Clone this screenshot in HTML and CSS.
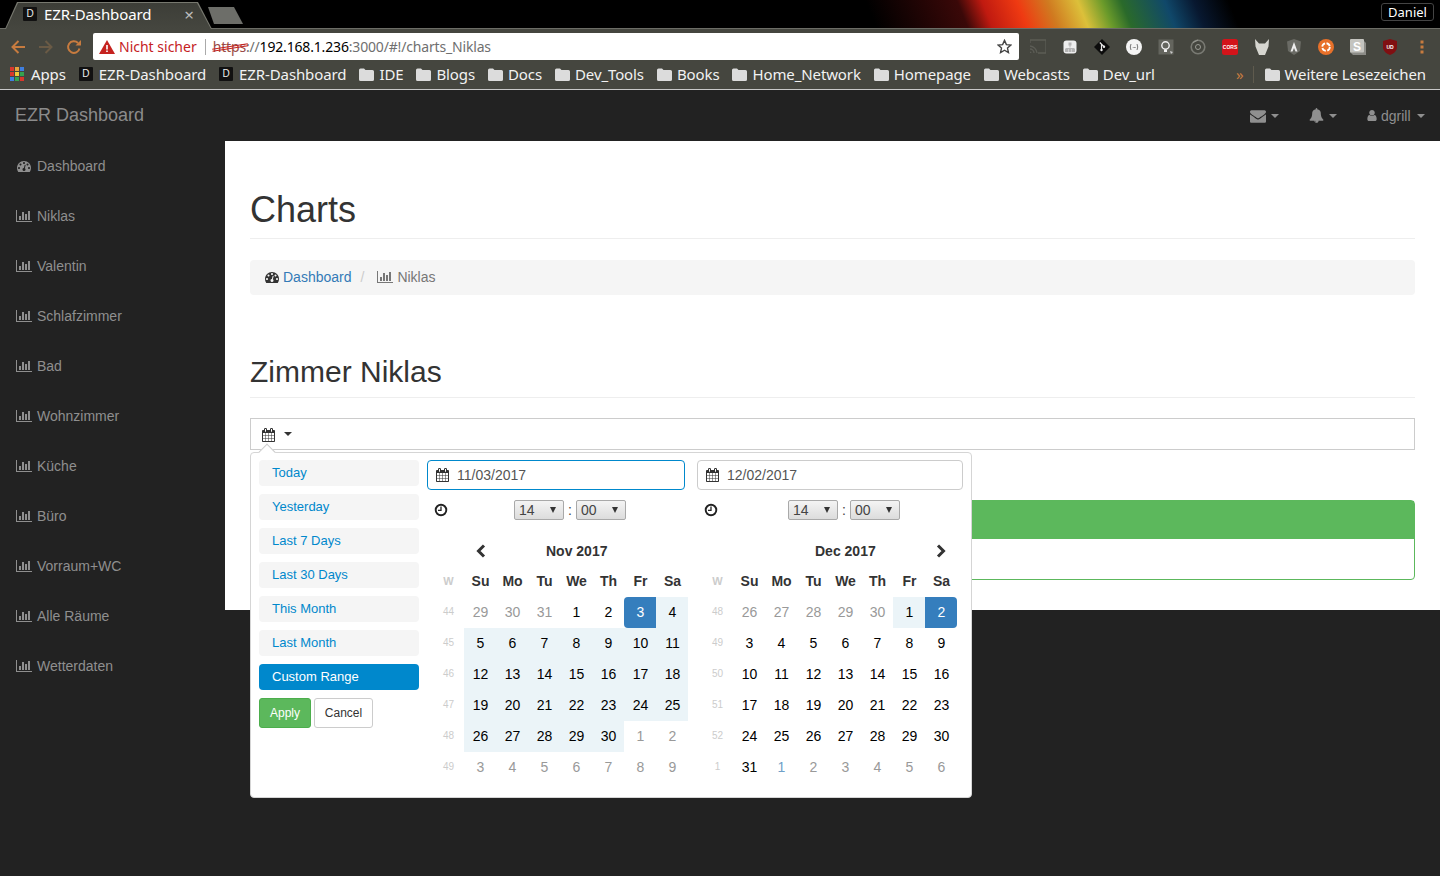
FILE: index.html
```html
<!DOCTYPE html>
<html lang="de">
<head>
<meta charset="utf-8">
<title>EZR-Dashboard</title>
<link rel="stylesheet" href="styles.css">
</head>
<body>
<svg class="defs" aria-hidden="true">
  <symbol id="i-bar" viewBox="0 0 2048 1792"><path d="M640 896v512h-256v-512h256zm384-512v1024h-256v-1024h256zm1024 1152v128h-2048v-1536h128v1408h1920zm-640-896v768h-256v-768h256zm384-384v1152h-256v-1152h256z"/></symbol>
  <symbol id="i-dash" viewBox="0 0 1792 1792"><path d="M384 1152q0-53-37.500-90.500t-90.500-37.500-90.500 37.500-37.500 90.500 37.500 90.500 90.500 37.500 90.500-37.500 37.500-90.500zm192-448q0-53-37.500-90.500t-90.500-37.500-90.500 37.500-37.500 90.500 37.500 90.500 90.500 37.500 90.500-37.500 37.500-90.500zm428 481l101-382q6-26-7.500-48.500t-38.500-29.500-48 6.500-30 39.500l-101 382q-60 5-107 43.500t-63 98.500q-20 77 20 146t117 89 146-20 89-117q16-60-6-117t-72-91zm660-33q0-53-37.500-90.500t-90.500-37.500-90.500 37.500-37.500 90.500 37.500 90.500 90.500 37.500 90.500-37.500 37.500-90.500zm-640-640q0-53-37.500-90.500t-90.500-37.500-90.500 37.500-37.500 90.500 37.500 90.500 90.500 37.500 90.500-37.500 37.500-90.500zm448 192q0-53-37.500-90.500t-90.500-37.500-90.500 37.500-37.500 90.500 37.500 90.500 90.500 37.500 90.500-37.500 37.500-90.500zm320 448q0 261-141 483-19 29-54 29h-1402q-35 0-54-29-141-221-141-483 0-182 71-348t191-286 286-191 348-71 348 71 286 191 191 286 71 348z"/></symbol>
  <symbol id="i-cal" viewBox="0 0 1664 1792"><path d="M192 1664h288v-288h-288v288zm352 0h320v-288h-320v288zm-352-352h288v-320h-288v320zm352 0h320v-320h-320v320zm-352-384h288v-288h-288v288zm736 736h320v-288h-320v288zm-384-736h320v-288h-320v288zm768 736h288v-288h-288v288zm-384-352h320v-320h-320v320zm-352-864v-288q0-13-9.500-22.500t-22.500-9.500h-64q-13 0-22.500 9.500t-9.500 22.500v288q0 13 9.500 22.500t22.500 9.500h64q13 0 22.500-9.500t9.500-22.500zm736 864h288v-320h-288v320zm-384-384h320v-288h-320v288zm384 0h288v-288h-288v288zm32-480v-288q0-13-9.500-22.500t-22.500-9.500h-64q-13 0-22.500 9.500t-9.500 22.500v288q0 13 9.500 22.500t22.500 9.500h64q13 0 22.500-9.500t9.500-22.500zm384-64v1280q0 52-38 90t-90 38h-1408q-52 0-90-38t-38-90v-1280q0-52 38-90t90-38h128v-96q0-66 47-113t113-47h64q66 0 113 47t47 113v96h384v-96q0-66 47-113t113-47h64q66 0 113 47t47 113v96h128q52 0 90 38t38 90z"/></symbol>
  <symbol id="i-env" viewBox="0 0 1792 1792"><path d="M1792 710v794q0 66-47 113t-113 47h-1472q-66 0-113-47t-47-113v-794q44 49 101 87 362 246 497 345 57 42 92.500 65.500t94.500 48 110 24.500h2q51 0 110-24.500t94.500-48 92.500-65.500q170-123 498-345 57-39 100-87zm0-294q0 79-49 151t-122 123q-376 261-468 325-10 7-42.500 30.500t-54 38-52 32.500-57.500 27-50 9h-2q-23 0-50-9t-57.500-27-52-32.500-54-38-42.500-30.500q-91-64-262-182.500t-205-142.500q-62-42-117-115.500t-55-136.500q0-78 41.500-130t118.500-52h1472q65 0 112.500 47t47.500 113z"/></symbol>
  <symbol id="i-bell" viewBox="0 0 1792 1792"><path d="M912 1696q0-16-16-16-59 0-101.500-42.500t-42.500-101.500q0-16-16-16t-16 16q0 73 51.500 124.500t124.500 51.500q16 0 16-16zm816-288q0 52-38 90t-90 38h-448q0 106-75 181t-181 75-181-75-75-181h-448q-52 0-90-38t-38-90q50-42 91-88t85-119.500 74.500-158.500 50-206 19.500-260q0-152 117-282.500t307-158.500q-8-19-8-39 0-40 28-68t68-28 68 28 28 68q0 20-8 39 190 28 307 158.500t117 282.500q0 139 19.500 260t50 206 74.500 158.500 85 119.500 91 88z"/></symbol>
  <symbol id="i-user" viewBox="256 0 1280 1792"><path d="M1536 1399q0 109-62.500 187t-150.500 78h-854q-88 0-150.500-78t-62.500-187q0-85 8.500-160.500t31.500-152 58.500-131 94-89 134.500-34.500q131 128 313 128t313-128q76 0 134.500 34.500t94 89 58.500 131 31.500 152 8.500 160.500zm-256-887q0 159-112.500 271.500t-271.500 112.500-271.500-112.500-112.500-271.500 112.500-271.500 271.500-112.500 271.500 112.500 112.500 271.500z"/></symbol>
  <symbol id="i-folder" viewBox="0 0 15 13"><path d="M0 2q0-1.500 1.500-1.500h3.500l1.500 1.500h7q1.500 0 1.500 1.500v8q0 1.500-1.500 1.500h-12q-1.500 0-1.500-1.500z"/></symbol>
  <symbol id="i-clock" viewBox="0 0 14 14"><circle cx="7" cy="7" r="5.300" fill="none" stroke="currentColor" stroke-width="1.900"/><path d="M7 3.500v3.900h-3" fill="none" stroke="currentColor" stroke-width="1.300"/></symbol>
</svg>

<header class="frame-top">
  <div class="tab">
    <span class="favicon">D</span>
    <span class="tab-title">EZR-Dashboard</span>
    <span class="tab-close">×</span>
  </div>
  <div class="newtab"></div>
  <div class="profile">Daniel</div>
</header>

<div class="toolbar">
  <div class="nav-btns">
    <svg class="nav-icon" viewBox="0 0 16 16"><path d="M15 8H2.500M8.500 2 2.500 8l6 6" fill="none" stroke="#c77b3f" stroke-width="2"/></svg>
    <svg class="nav-icon" viewBox="0 0 16 16"><path d="M1 8h12.500M7.500 2l6 6-6 6" fill="none" stroke="#6a5a45" stroke-width="2"/></svg>
    <svg class="nav-icon" viewBox="0 0 16 16"><path d="M13.500 9.500A5.800 5.800 0 1 1 12 4" fill="none" stroke="#c77b3f" stroke-width="2"/><path d="M9.500 6.500h5.500v-5.500z" fill="#c77b3f"/></svg>
  </div>
  <div class="omnibox">
    <svg class="warn" viewBox="0 0 16 14"><path d="M8 0 16 14H0z" fill="#c5221f"/><path d="M7.200 5h1.600v4.500H7.200zM7.200 10.500h1.600V12H7.200z" fill="#fff"/></svg>
    <span class="insecure">Nicht sicher</span>
    <span class="omni-sep"></span>
    <span class="url"><span class="scheme">https</span><span class="url-dim">://</span><span class="url-host">192.168.1.236</span><span class="url-dim">:3000/#!/charts_Niklas</span></span>
    <svg class="star" viewBox="0 0 16 16"><path d="M8 1.500 10 6l4.800.5-3.600 3.200 1 4.800L8 12l-4.200 2.500 1-4.800L1.200 6.500 6 6z" fill="none" stroke="#444" stroke-width="1.500"/></svg>
  </div>
  <div class="exts">
    <svg class="ext" viewBox="0 0 16 16"><path d="M0 4V1h16v13H8M0 7a8 8 0 0 1 7 7M0 10a4 4 0 0 1 4 4" fill="none" stroke="#5c5d56" stroke-width="1.300"/><path d="M0 12.500a1.500 1.500 0 0 1 1.500 1.500H0z" fill="#5c5d56"/></svg>
    <svg class="ext" viewBox="0 0 16 16"><rect x="1.500" y="1.500" width="13" height="13" rx="3" fill="#eee"/><path d="M6.500 3.500h3v3h-3zM7.500 6.500h1v2h-1zM3.500 9h9v1h-9zM3 10h3v3H3zM6.500 10h3v3h-3zM10 10h3v3h-3z" fill="#b5b5b5"/></svg>
    <svg class="ext" viewBox="0 0 16 16"><path d="M8 0 16 8 8 16 0 8z" fill="#0c0c0c"/><path d="M5.800 3.500 10 7.700M7.500 5.200v6" stroke="#e8e8e8" fill="none" stroke-width="1.200"/><circle cx="10" cy="7.700" r="1.200" fill="#e8e8e8"/><circle cx="7.500" cy="11" r="1.200" fill="#e8e8e8"/></svg>
    <svg class="ext" viewBox="0 0 16 16"><circle cx="8" cy="8" r="8" fill="#f4f4f4"/><path d="M5 5q-1.500 3 0 6M11 5q1.500 3 0 6M6.800 8.500h.8M8 8.500h.8M9.200 8.500h.6" stroke="#777" fill="none"/></svg>
    <svg class="ext" viewBox="0 0 16 16"><rect x=".5" y=".5" width="15" height="15" fill="#64655e"/><circle cx="7.500" cy="6.500" r="3.700" fill="none" stroke="#f2f2f2" stroke-width="1.400"/><path d="M6 10.500h3v2.500H6z" fill="#f2f2f2"/><path d="M12 12l3 1-2 2z" fill="#ccc"/></svg>
    <svg class="ext" viewBox="0 0 16 16"><circle cx="8" cy="8" r="6.800" fill="none" stroke="#797a73" stroke-width="1.600"/><circle cx="8" cy="8" r="2.500" fill="none" stroke="#9a9b94"/><path d="M3 3.500 8 1" stroke="#9a9b94" fill="none"/></svg>
    <svg class="ext" viewBox="0 0 16 16"><rect width="16" height="16" rx="2.500" fill="#d3131a"/><text x="8" y="10" class="ext-text">CORS</text></svg>
    <svg class="ext" viewBox="0 0 16 16"><path d="M1 0 5 4.500h6L15 0l-.500 7.500L11 16H5L1.500 7.500z" fill="#d6d6d0"/></svg>
    <svg class="ext" viewBox="0 0 16 16"><path d="M8 0 15 2.500 14 12 8 16 2 12 1 2.500z" fill="#6a6b65"/><path d="M8 3 4.500 12.500h2L8 9l1.500 3.500h2z" fill="#eee"/></svg>
    <svg class="ext" viewBox="0 0 16 16"><circle cx="8" cy="8" r="8" fill="#e8712a"/><circle cx="8" cy="8" r="3.800" fill="none" stroke="#fff" stroke-width="1.800" stroke-dasharray="4.500 1.500"/></svg>
    <svg class="ext" viewBox="0 0 16 16"><path d="M13 1l3 3v12H3l-3-3z" fill="#8c8c87"/><rect width="14" height="13.500" rx="1" fill="#c4c4bf"/><text x="7" y="11.500" class="ext-s">S</text></svg>
    <svg class="ext" viewBox="0 0 16 16"><path d="M8 0 15 2v7q-1 5-7 7-6-2-7-7V2z" fill="#800f12"/><text x="8" y="10" class="ext-text">UD</text></svg>
    <svg class="ext" viewBox="0 0 16 16"><path d="M6.500 1.500h3v3h-3zM6.500 6.500h3v3h-3zM6.500 11.500h3v3h-3z" fill="#c77b3f"/></svg>
  </div>
</div>

<nav class="bookmarks">
  <span class="bm bm-apps"><span class="apps-grid"><i class="c1"></i><i class="c2"></i><i class="c3"></i><i class="c4"></i><i class="c5"></i><i class="c6"></i><i class="c7"></i><i class="c8"></i><i class="c1"></i></span>Apps</span>
  <span class="bm"><span class="favicon">D</span>EZR-Dashboard</span>
  <span class="bm"><span class="favicon">D</span>EZR-Dashboard</span>
  <span class="bm"><svg class="folder"><use href="#i-folder"/></svg>IDE</span>
  <span class="bm"><svg class="folder"><use href="#i-folder"/></svg>Blogs</span>
  <span class="bm"><svg class="folder"><use href="#i-folder"/></svg>Docs</span>
  <span class="bm"><svg class="folder"><use href="#i-folder"/></svg>Dev_Tools</span>
  <span class="bm"><svg class="folder"><use href="#i-folder"/></svg>Books</span>
  <span class="bm"><svg class="folder"><use href="#i-folder"/></svg>Home_Network</span>
  <span class="bm"><svg class="folder"><use href="#i-folder"/></svg>Homepage</span>
  <span class="bm"><svg class="folder"><use href="#i-folder"/></svg>Webcasts</span>
  <span class="bm"><svg class="folder"><use href="#i-folder"/></svg>Dev_url</span>
  <span class="bm-more">»</span>
  <span class="bm-sep"></span>
  <span class="bm"><svg class="folder"><use href="#i-folder"/></svg>Weitere Lesezeichen</span>
</nav>

<div class="navbar">
  <a class="brand">EZR Dashboard</a>
  <div class="nav-right">
    <span class="nav-item nav-mail"><svg class="ic-env"><use href="#i-env"/></svg><i class="caret"></i></span>
    <span class="nav-item nav-bell"><svg class="ic-bell"><use href="#i-bell"/></svg><i class="caret"></i></span>
    <span class="nav-item nav-user"><svg class="ic-user"><use href="#i-user"/></svg>dgrill<i class="caret caret-user"></i></span>
  </div>
</div>

<div class="app">
  <aside class="sidebar">
    <a class="side-link"><svg class="ic-dash"><use href="#i-dash"/></svg>Dashboard</a>
    <a class="side-link"><svg class="ic-bar"><use href="#i-bar"/></svg>Niklas</a>
    <a class="side-link"><svg class="ic-bar"><use href="#i-bar"/></svg>Valentin</a>
    <a class="side-link"><svg class="ic-bar"><use href="#i-bar"/></svg>Schlafzimmer</a>
    <a class="side-link"><svg class="ic-bar"><use href="#i-bar"/></svg>Bad</a>
    <a class="side-link"><svg class="ic-bar"><use href="#i-bar"/></svg>Wohnzimmer</a>
    <a class="side-link"><svg class="ic-bar"><use href="#i-bar"/></svg>Küche</a>
    <a class="side-link"><svg class="ic-bar"><use href="#i-bar"/></svg>Büro</a>
    <a class="side-link"><svg class="ic-bar"><use href="#i-bar"/></svg>Vorraum+WC</a>
    <a class="side-link"><svg class="ic-bar"><use href="#i-bar"/></svg>Alle Räume</a>
    <a class="side-link"><svg class="ic-bar"><use href="#i-bar"/></svg>Wetterdaten</a>
  </aside>

  <main class="content">
    <h1 class="page-title">Charts</h1>
    <div class="breadcrumb">
      <svg class="ic-dash ic-dark"><use href="#i-dash"/></svg><a class="crumb-link">Dashboard</a>
      <span class="crumb-sep">/</span>
      <svg class="ic-bar ic-crumb"><use href="#i-bar"/></svg><span class="crumb-cur">Niklas</span>
    </div>
    <h2 class="room-title">Zimmer Niklas</h2>

    <div class="picker-wrap">
      <div class="picker-field">
        <svg class="ic-cal"><use href="#i-cal"/></svg><i class="caret caret-dark"></i>
      </div>

      <div class="popup">
        <div class="ranges">
          <a class="range">Today</a>
          <a class="range">Yesterday</a>
          <a class="range">Last 7 Days</a>
          <a class="range">Last 30 Days</a>
          <a class="range">This Month</a>
          <a class="range">Last Month</a>
          <a class="range range-active">Custom Range</a>
          <div class="range-btns">
            <button class="btn btn-apply">Apply</button>
            <button class="btn btn-cancel">Cancel</button>
          </div>
        </div>

        <section class="cal cal-left">
          <div class="date-input date-focus"><svg class="ic-cal"><use href="#i-cal"/></svg>11/03/2017</div>
          <div class="time-row">
            <svg class="ic-clock"><use href="#i-clock"/></svg>
            <span class="sel-box">14</span><span class="colon">:</span><span class="sel-box">00</span>
          </div>
          <div class="month-row">
            <svg class="chev" viewBox="0 0 12 14"><path d="M9 1.500 3.500 7 9 12.500" /></svg>
            <span class="month-name">Nov 2017</span>
          </div>
          <div class="grid">
            <b class="wk wk-h">W</b><b>Su</b><b>Mo</b><b>Tu</b><b>We</b><b>Th</b><b>Fr</b><b>Sa</b>
            <i class="wk">44</i><span class="off">29</span><span class="off">30</span><span class="off">31</span><span>1</span><span>2</span><span class="sel sel-start">3</span><span class="in">4</span>
            <i class="wk">45</i><span class="in">5</span><span class="in">6</span><span class="in">7</span><span class="in">8</span><span class="in">9</span><span class="in">10</span><span class="in">11</span>
            <i class="wk">46</i><span class="in">12</span><span class="in">13</span><span class="in">14</span><span class="in">15</span><span class="in">16</span><span class="in">17</span><span class="in">18</span>
            <i class="wk">47</i><span class="in">19</span><span class="in">20</span><span class="in">21</span><span class="in">22</span><span class="in">23</span><span class="in">24</span><span class="in">25</span>
            <i class="wk">48</i><span class="in">26</span><span class="in">27</span><span class="in">28</span><span class="in">29</span><span class="in">30</span><span class="off">1</span><span class="off">2</span>
            <i class="wk">49</i><span class="off">3</span><span class="off">4</span><span class="off">5</span><span class="off">6</span><span class="off">7</span><span class="off">8</span><span class="off">9</span>
          </div>
        </section>

        <section class="cal cal-right">
          <div class="date-input"><svg class="ic-cal"><use href="#i-cal"/></svg>12/02/2017</div>
          <div class="time-row">
            <svg class="ic-clock"><use href="#i-clock"/></svg>
            <span class="sel-box">14</span><span class="colon">:</span><span class="sel-box">00</span>
          </div>
          <div class="month-row">
            <span class="month-name">Dec 2017</span>
            <svg class="chev" viewBox="0 0 12 14"><path d="M3 1.500 8.500 7 3 12.500" /></svg>
          </div>
          <div class="grid">
            <b class="wk wk-h">W</b><b>Su</b><b>Mo</b><b>Tu</b><b>We</b><b>Th</b><b>Fr</b><b>Sa</b>
            <i class="wk">48</i><span class="off">26</span><span class="off">27</span><span class="off">28</span><span class="off">29</span><span class="off">30</span><span class="in">1</span><span class="sel sel-end">2</span>
            <i class="wk">49</i><span>3</span><span>4</span><span>5</span><span>6</span><span>7</span><span>8</span><span>9</span>
            <i class="wk">50</i><span>10</span><span>11</span><span>12</span><span>13</span><span>14</span><span>15</span><span>16</span>
            <i class="wk">51</i><span>17</span><span>18</span><span>19</span><span>20</span><span>21</span><span>22</span><span>23</span>
            <i class="wk">52</i><span>24</span><span>25</span><span>26</span><span>27</span><span>28</span><span>29</span><span>30</span>
            <i class="wk">1</i><span>31</span><span class="off off-blue">1</span><span class="off">2</span><span class="off">3</span><span class="off">4</span><span class="off">5</span><span class="off">6</span>
          </div>
        </section>
      </div>
    </div>

    <div class="panel">
      <div class="panel-head"></div>
    </div>
  </main>
</div>
</body>
</html>
```

FILE: styles.css
```css
* { box-sizing: border-box; }
html, body { margin: 0; height: 876px; overflow: hidden; }
body {
  background: #222;
  font-family: "Liberation Sans", Arial, sans-serif;
  font-size: 14px;
  color: #333;
}
.defs { width: 0; height: 0; display: block; }
svg { display: block; flex: none; fill: currentColor; }
i { font-style: normal; }

/* browser frame */
.frame-top {
  height: 29px;
  display: flex;
  align-items: flex-end;
  padding-left: 5px;
  position: relative;
  background: linear-gradient(68deg, #000 60.400%, #3a0808 66.700%, #c01a10 68.400%, #ef3a12 70.800%, #d07a20 72.900%, #dcc03a 75%, #6a9a2a 76.700%, #2a6a2a 78%, #10486a 81%, #081830 83%, #000 85.400%);
  border-bottom: 1px solid #6c6d66;
}
.tab {
  width: 207px;
  height: 28px;
  margin-bottom: -1px;
  position: relative;
  display: flex;
  align-items: center;
  padding: 0 18px 2px 18px;
  color: #fff;
  font-family: "Noto Sans", sans-serif;
  font-size: 15px;
  background: #77786f;
  clip-path: polygon(0 100%, 12px 1px, 193px 1px, 100% 100%);
}
.tab::before {
  content: "";
  position: absolute;
  inset: 0;
  background: linear-gradient(#3c3d37, #45463f);
  clip-path: polygon(1px 100%, 13px 2px, 192px 2px, 206px 100%);
}
.tab > * { position: relative; }
.favicon {
  width: 14px;
  height: 14px;
  background: #111;
  color: #eee;
  font: 10px/14px "Liberation Sans", sans-serif;
  text-align: center;
  border-radius: 1px;
  flex: none;
}
.tab-title { margin-left: 7px; flex: 1; letter-spacing: -0.1px; }
.tab-close { color: #bbb; font-size: 17px; line-height: 1; }
.newtab {
  width: 35px;
  height: 17px;
  margin: 0 0 4px -4px;
  background: #6d6e69;
  clip-path: polygon(0 0, 26px 0, 100% 100%, 6px 100%);
}
.profile {
  position: absolute;
  right: 6px;
  top: 3px;
  width: 53px;
  height: 18px;
  border: 1px solid #444;
  border-radius: 3px;
  color: #fff;
  background: #000;
  font: 13px/16px "Noto Sans", sans-serif;
  text-align: center;
}
.toolbar {
  height: 32px;
  background: #45463f;
  display: flex;
  align-items: flex-start;
  padding-top: 4px;
}
.nav-btns { width: 93px; display: flex; padding: 6px 0 0 10px; gap: 12px; }
.nav-icon { width: 16px; height: 16px; }
.omnibox {
  width: 926px;
  height: 27px;
  background: #fff;
  border-radius: 2px;
  display: flex;
  align-items: center;
  padding: 0 6px;
  font-family: "Noto Sans", sans-serif;
  font-size: 14px;
}
.warn { width: 16px; height: 14px; }
.insecure { color: #c5221f; margin-left: 4px; }
.omni-sep { width: 1px; height: 16px; background: #aaa; margin: 0 7px 0 8px; }
.url { flex: 1; color: #000; white-space: nowrap; letter-spacing: -0.17px; }
.scheme { color: #9a4a45; position: relative; }
.scheme::after {
  content: "";
  position: absolute;
  left: -1px;
  right: -2px;
  top: 9px;
  height: 1px;
  background: #c5221f;
  box-shadow: 0 2px 0 #c5221f;
  transform: rotate(-9deg);
}
.url-dim { color: #6f6f6f; }
.star { width: 15px; height: 15px; margin-right: 1px; }
.exts { flex: 1; display: flex; padding: 6px 0 0 11px; gap: 16px; }
.ext { width: 16px; height: 16px; }
.ext-text { font: bold 5px "Liberation Sans", sans-serif; fill: #fff; text-anchor: middle; }
.ext-s { font: bold 12px "Liberation Sans", sans-serif; fill: #fff; text-anchor: middle; }

.bookmarks {
  height: 29px;
  background: #45463f;
  border-bottom: 1px solid #c8c8c8;
  display: flex;
  align-items: center;
  padding: 0 14px 2px 10px;
  gap: 13px;
  color: #f2f2f2;
  font-family: "Noto Sans", sans-serif;
  font-size: 15px;
  letter-spacing: -0.11px;
  white-space: nowrap;
}
.bm { display: flex; align-items: center; gap: 6px; }
.bm-apps { gap: 7px; }
.folder { width: 15px; height: 13px; fill: #dcdcdc; margin-right: -1px; }
.apps-grid { width: 14px; display: grid; grid-template-columns: repeat(3, 4px); gap: 1px; }
.apps-grid i { height: 4px; display: block; }
.c1 { background: #d9372c; }
.c2 { background: #e8a33d; }
.c3 { background: #3f7fe0; }
.c4 { background: #d9372c; }
.c5 { background: #f0c93a; }
.c6 { background: #35a24f; }
.c7 { background: #3f7fe0; }
.c8 { background: #35a24f; }
.bm-more { color: #c77b3f; margin-left: auto; margin-right: -4px; }
.bm-sep { width: 1px; height: 17px; background: #5f5b4e; margin-right: -2px; }

/* app */
.navbar {
  height: 51px;
  background: #222;
  display: flex;
  align-items: center;
  justify-content: space-between;
  padding: 0 15px;
  color: #9d9d9d;
}
.brand { font-size: 18px; color: #8b8b8b; }
.nav-right { display: flex; align-items: center; color: #8f8f8f; font-size: 14px; }
.nav-item { display: flex; align-items: center; }
.nav-mail { width: 59px; }
.nav-bell { width: 58px; }
.nav-user { width: 58px; }
.ic-env { width: 16px; height: 16px; }
.ic-bell { width: 15px; height: 15px; margin-top: -1px; }
.ic-user { width: 12px; height: 13px; margin: 0 3px 0 -1px; }
.caret {
  width: 0;
  height: 0;
  display: block;
  margin-left: 5px;
  border: 4px solid transparent;
  border-top-color: currentColor;
  border-bottom: 0;
}
.caret-user { margin-left: 6px; }

.app { display: flex; align-items: flex-start; }
.sidebar { width: 225px; flex: none; background: #222; }
.side-link {
  height: 50px;
  display: flex;
  align-items: center;
  padding-left: 16px;
  color: #8f8f8f;
  gap: 5px;
}
.ic-dash { width: 16px; height: 14px; }
.ic-bar { width: 16px; height: 14px; }

.content {
  flex: 1;
  height: 469px;
  background: #fff;
  padding: 0 25px;
}
.page-title {
  margin: 0;
  height: 98px;
  padding-top: 47px;
  font-size: 36px;
  line-height: 44px;
  font-weight: 400;
  border-bottom: 1px solid #eee;
}
.breadcrumb {
  margin-top: 21px;
  height: 35px;
  padding: 0 15px 2px 14px;
  background: #f5f5f5;
  border-radius: 4px;
  display: flex;
  align-items: center;
  color: #777;
}
.ic-dark { color: #333; margin-right: 3px; }
.ic-crumb { margin-right: 4px; color: #777; }
.crumb-link { color: #337ab7; }
.crumb-sep { color: #ccc; margin: 0 13px 0 9px; }
.room-title {
  margin: 0;
  height: 103px;
  padding-top: 60px;
  font-size: 30px;
  line-height: 34px;
  font-weight: 400;
  border-bottom: 1px solid #eee;
}
.picker-wrap { position: relative; margin-top: 20px; }
.picker-field {
  height: 32px;
  border: 1px solid #ccc;
  display: flex;
  align-items: center;
  padding-left: 10px;
  color: #333;
}
.picker-field .ic-cal { margin-top: 2px; }
.ic-cal { width: 14px; height: 14px; flex: none; }
.caret-dark { margin-left: 9px; }

.popup {
  position: absolute;
  left: 0;
  top: 34px;
  width: 722px;
  height: 346px;
  z-index: 5;
  background: #fff;
  border-radius: 4px;
  border: 1px solid #d5d5d5;
  display: flex;
  padding: 7px 0 0 8px;
  color: #333;
}
.popup::before {
  content: "";
  position: absolute;
  left: 10px;
  top: -7px;
  width: 11px;
  height: 11px;
  background: #fff;
  border-left: 1px solid #ccc;
  border-top: 1px solid #ccc;
  transform: rotate(45deg);
}
.ranges { width: 160px; flex: none; margin-right: 8px; display: flex; flex-direction: column; gap: 8px; }
.range {
  height: 26px;
  background: #f5f5f5;
  border-radius: 4px;
  color: #08c;
  font-size: 13px;
  line-height: 26px;
  padding-left: 13px;
}
.range-active { background: #08c; color: #fff; }
.range-btns { display: flex; gap: 3px; }
.btn {
  height: 30px;
  border-radius: 3px;
  font: 12px "Liberation Sans", sans-serif;
  padding: 0;
  background: #fff;
}
.btn-apply { width: 52px; background: #5cb85c; border: 1px solid #4cae4c; color: #fff; }
.btn-cancel { width: 59px; border: 1px solid #ccc; color: #333; }

.cal-left { width: 258px; flex: none; margin-right: 12px; }
.cal-right { width: 266px; flex: none; }
.date-input {
  height: 30px;
  border: 1px solid #ccc;
  border-radius: 4px;
  display: flex;
  align-items: center;
  gap: 8px;
  padding-left: 7px;
  color: #555;
}
.date-focus { border-color: #08c; }
.date-input .ic-cal { color: #333; }
.time-row { height: 20px; margin-top: 10px; display: flex; align-items: center; padding-left: 7px; }
.ic-clock { width: 14px; height: 14px; margin-right: 66px; color: #222; }
.cal-right .ic-clock { margin-right: 70px; }
.sel-box {
  width: 50px;
  height: 20px;
  border: 1px solid #a9a9a9;
  border-radius: 2px;
  background: linear-gradient(#f4f4f4, #dcdcdc);
  color: #444;
  font-size: 14px;
  line-height: 18px;
  padding-left: 4px;
  position: relative;
}
.sel-box::after {
  content: "";
  position: absolute;
  right: 7px;
  top: 6px;
  border: 3.500px solid transparent;
  border-top: 6px solid #333;
  border-bottom: 0;
}
.colon { width: 12px; text-align: center; color: #444; }
.month-row {
  height: 30px;
  margin-top: 16px;
  display: flex;
  align-items: center;
}
.cal-left .month-row { padding-left: 48px; }
.cal-left .month-name { margin-left: 59px; }
.cal-right .month-name { margin-left: 118px; }
.cal-right .month-row .chev { margin-left: 59px; }
.month-name { font-weight: 700; font-size: 14px; }
.chev { width: 12px; height: 14px; fill: none; stroke: #333; stroke-width: 3; }

.grid {
  width: 256px;
  display: grid;
  grid-template-columns: repeat(8, 32px);
  grid-auto-rows: 31px;
  font-size: 14px;
}
.cal-left .grid { margin-left: 5px; }
.cal-right .grid { margin-left: 4px; }
.grid > * { display: flex; align-items: center; justify-content: center; color: #000; padding: 0 0 2px 1px; }
.grid > b { color: #333; font-weight: 700; }
.grid > .wk { color: #ccc; font-size: 10px; }
.grid > .wk-h { font-size: 11px; }
.grid > .off { color: #999; }
.grid > .off-blue { color: #6fa0c8; }
.grid > .in { background: #ebf4f8; }
.grid > .sel { background: #357ebd; color: #fff; }
.sel-start { border-radius: 4px 0 0 4px; }
.sel-end { border-radius: 0 4px 4px 0; }

.panel {
  margin-top: 50px;
  height: 80px;
  border: 1px solid #5cb85c;
  border-radius: 4px;
  background: #fff;
}
.panel-head { height: 38px; background: #5cb85c; }
```
